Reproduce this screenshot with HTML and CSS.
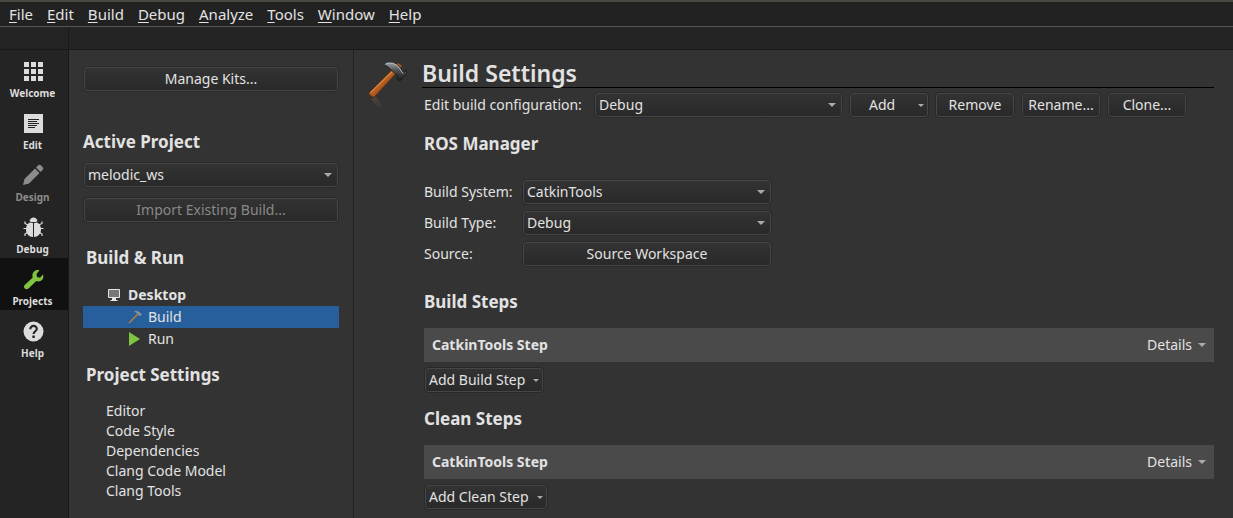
FILE: index.html
```html
<!DOCTYPE html>
<html lang="en">
<head>
<meta charset="utf-8">
<title>Build Settings</title>
<link rel="stylesheet" href="styles.css">
</head>
<body>
<nav class="menubar" aria-label="Main menu">
  <button class="menu"><u>F</u>ile</button>
  <button class="menu"><u>E</u>dit</button>
  <button class="menu"><u>B</u>uild</button>
  <button class="menu"><u>D</u>ebug</button>
  <button class="menu"><u>A</u>nalyze</button>
  <button class="menu"><u>T</u>ools</button>
  <button class="menu"><u>W</u>indow</button>
  <button class="menu"><u>H</u>elp</button>
</nav>
<div class="toolbar"><div class="toolbar-corner"></div></div>
<div class="workspace">
  <nav class="modes" aria-label="Modes">
    <button class="mode">
      <svg width="22" height="22" viewBox="0 0 22 22" fill="currentColor"><path d="M2 2h5v5H2zM9 2h5v5H9zM16 2h5v5h-5zM2 9h5v5H2zM9 9h5v5H9zM16 9h5v5h-5zM2 16h5v5H2zM9 16h5v5H9zM16 16h5v5h-5z"/></svg>
      <span>Welcome</span>
    </button>
    <button class="mode">
      <svg width="22" height="22" viewBox="0 0 22 22"><path fill="currentColor" d="M2 2h19v19H2z"/><path stroke="#222" d="M6 7.500h11M6 9.500h9M6 11.500h11M6 13.500h9M6 15.500h7"/></svg>
      <span>Edit</span>
    </button>
    <button class="mode mode-disabled" disabled>
      <svg width="22" height="22" viewBox="0 0 22 22" fill="currentColor"><path d="M1 21l1.500-6L13 4.500l4.500 4.500L7 19.500zM14 3.500l2.500-2.500q1-.6 2 0l2.500 2.500q.6 1 0 2L18.500 8z"/></svg>
      <span>Design</span>
    </button>
    <button class="mode">
      <svg width="22" height="22" viewBox="0 0 22 22"><path fill="none" stroke="currentColor" stroke-width="1.200" d="M6 9L3 7.500V5.500M5 12.500H1.500M6 16l-3 2v2M17 9l3-1.500v-2M18 12.500h3.500M17 16l3 2v2"/><path fill="currentColor" d="M7.500 5Q8.500 1.500 11.500 1.500T15.500 5L14 6H9z"/><path fill="currentColor" d="M11 7v14C7 21 4 17.500 4 13.500 4 10 5.500 7.500 8 6.500zM12 7v14c4 0 7-3.500 7-7.500 0-3.500-1.500-6-4-7z"/></svg>
      <span>Debug</span>
    </button>
    <button class="mode mode-active" aria-pressed="true">
      <svg width="22" height="22" viewBox="0 0 22 22"><path fill="#80c342" d="M17.500 2.300L14.500 6l.5 3 3 .7 3-3.200c1 3-.2 5.500-2.500 6.500-1.500.6-3 .5-4.200 0L6.500 20.500c-2.500 2.200-6-.9-3.800-3.500L10.700 9.500C9.300 5 13 1 17.500 2.300z"/></svg>
      <span>Projects</span>
    </button>
    <button class="mode">
      <svg width="22" height="22" viewBox="0 0 22 22"><circle cx="11.500" cy="11.500" r="10" fill="currentColor"/><path fill="none" stroke="#262626" stroke-width="2.200" d="M8.300 9.200C8.300 4.700 15 5 14.800 9c-.2 2.300-3.200 2.300-3.200 5"/><path fill="#262626" d="M10.300 15.500h2.500V18h-2.500z"/></svg>
      <span>Help</span>
    </button>
  </nav>

  <aside class="panel">
    <button class="btn">Manage Kits...</button>
    <section class="group project-group">
      <h2><label for="project">Active Project</label></h2>
      <div class="combo">
        <select id="project"><option>melodic_ws</option></select>
        <svg class="arrow" width="8" height="4" viewBox="0 0 8 4"><path d="M0 0h8L4 4z"/></svg>
      </div>
      <button class="btn" disabled>Import Existing Build...</button>
    </section>
    <section class="group run-group">
      <h2 class="inset">Build &amp; Run</h2>
      <ul class="tree">
        <li class="kit">
          <svg width="14" height="14" viewBox="0 0 14 14"><path fill="#777" stroke="#e4e4e4" d="M1.500 1.500h11v8h-11z"/><path fill="#e4e4e4" d="M5 10h4v2h1.500v1h-7v-1H5z"/></svg>
          Desktop
        </li>
        <li class="target selected">
          <svg width="14" height="14" viewBox="0 0 14 14"><path stroke="#ad7b4c" stroke-width="1.700" d="M1 13L10 4"/><path fill="#8492a0" d="M6 1.200Q9-.2 11.500 2.200l2.500 2.300-2 1.700-2.300-2.200L8 2.500z"/></svg>
          Build
        </li>
        <li class="target">
          <svg width="14" height="14" viewBox="0 0 14 14"><path fill="#80c342" d="M1 0l11 7-11 7z"/></svg>
          Run
        </li>
      </ul>
    </section>
    <section class="group settings-group">
      <h2 class="inset">Project Settings</h2>
      <ul class="settings">
        <li>Editor</li>
        <li>Code Style</li>
        <li>Dependencies</li>
        <li>Clang Code Model</li>
        <li>Clang Tools</li>
      </ul>
    </section>
  </aside>

  <main class="page">
    <svg class="hammer" width="42" height="50" viewBox="0 0 42 50">
      <defs>
        <linearGradient id="wood" x1="0" y1="0" x2="1" y2="1"><stop offset=".35" stop-color="#d67a35"/><stop offset=".65" stop-color="#984510"/></linearGradient>
        <linearGradient id="steel" x1="0" y1="0" x2="0" y2="1"><stop offset="0" stop-color="#a5a8a8"/><stop offset=".45" stop-color="#4c5050"/><stop offset="1" stop-color="#171a1a"/></linearGradient>
        <linearGradient id="fade" x1="0" y1="0" x2="0" y2="1"><stop offset="0" stop-color="#80573c" stop-opacity=".5"/><stop offset="1" stop-color="#80573c" stop-opacity="0"/></linearGradient>
      </defs>
      <path fill="url(#fade)" d="M3 38l5-2 8 11h-6z"/>
      <path fill="url(#wood)" stroke="#7a3409" stroke-width=".6" d="M1 32L25 8l5-6 4 3-4 5L6 36q-4-1-5-4z"/>
      <path stroke="#e9a566" stroke-width=".8" d="M3 31L26 9"/>
      <path fill="url(#steel)" stroke="#181b1b" stroke-width=".8" d="M15 3q10-5 17 3l3 5q2 1 3-2l1 3-7 8-3-2 0-4-6-5q-3-4-8-6z"/>
      <path fill="none" stroke="#b8bbbb" stroke-width="1" d="M18 2.500q8-2 13 4l4 6"/>
    </svg>
    <div class="content">
      <h1>Build Settings</h1>
      <div class="config">
        <label for="config">Edit build configuration:</label>
        <div class="combo config-combo">
          <select id="config"><option>Debug</option></select>
          <svg class="arrow" width="8" height="4" viewBox="0 0 8 4"><path d="M0 0h8L4 4z"/></svg>
        </div>
        <button class="btn action split"><span>Add</span><svg class="small-arrow" width="6" height="3" viewBox="0 0 6 3"><path d="M0 0h6L3 3z"/></svg></button>
        <button class="btn action">Remove</button>
        <button class="btn action">Rename...</button>
        <button class="btn action">Clone...</button>
      </div>

      <h2 class="section">ROS Manager</h2>
      <div class="form">
        <label for="system">Build System:</label>
        <div class="combo">
          <select id="system"><option>CatkinTools</option></select>
          <svg class="arrow" width="8" height="4" viewBox="0 0 8 4"><path d="M0 0h8L4 4z"/></svg>
        </div>
        <label for="type">Build Type:</label>
        <div class="combo">
          <select id="type"><option>Debug</option></select>
          <svg class="arrow" width="8" height="4" viewBox="0 0 8 4"><path d="M0 0h8L4 4z"/></svg>
        </div>
        <label for="source">Source:</label>
        <button class="btn" id="source">Source Workspace</button>
      </div>

      <section class="steps">
        <h2>Build Steps</h2>
        <div class="step">
          <strong>CatkinTools Step</strong>
          <button class="details">Details <svg class="arrow-inline" width="8" height="4" viewBox="0 0 8 4"><path d="M0 0h8L4 4z"/></svg></button>
        </div>
        <button class="btn add">Add Build Step <svg class="small-arrow" width="6" height="3" viewBox="0 0 6 3"><path d="M0 0h6L3 3z"/></svg></button>
      </section>
      <section class="steps">
        <h2>Clean Steps</h2>
        <div class="step">
          <strong>CatkinTools Step</strong>
          <button class="details">Details <svg class="arrow-inline" width="8" height="4" viewBox="0 0 8 4"><path d="M0 0h8L4 4z"/></svg></button>
        </div>
        <button class="btn add">Add Clean Step <svg class="small-arrow" width="6" height="3" viewBox="0 0 6 3"><path d="M0 0h6L3 3z"/></svg></button>
      </section>
    </div>
  </main>
</div>
</body>
</html>
```
FILE: styles.css
```css
* {
  box-sizing: border-box;
}

body {
  margin: 0;
  height: 100vh;
  overflow: hidden;
  display: flex;
  flex-direction: column;
  background: #333;
  color: #e2e2e2;
  font: 14px/20px "Noto Sans", "Open Sans", sans-serif;
}

button,
select {
  font: inherit;
  color: inherit;
}

h1,
h2,
ul {
  margin: 0;
  padding: 0;
}

h2 {
  font-size: 17px;
  line-height: 24px;
  font-weight: 700;
}

ul {
  list-style: none;
}

.menubar {
  flex: none;
  display: flex;
  gap: 14px;
  height: 27px;
  padding: 0 9px;
  border-top: 2px solid #4b4743;
  border-bottom: 1px solid #585858;
  background: #222;
  font-size: 15px;
}

.menu {
  padding: 0;
  border: 0;
  background: none;
}

.menu u {
  text-underline-offset: 2px;
}

.toolbar {
  flex: none;
  height: 23px;
  background: #242424;
  border-bottom: 1px solid #191919;
}

.toolbar-corner {
  width: 69px;
  height: 22px;
  border-right: 1px solid #191919;
}

.workspace {
  flex: 1;
  min-height: 0;
  display: flex;
}

.modes {
  flex: none;
  width: 69px;
  background: #242424;
  border-right: 1px solid #191919;
}

.mode {
  width: 100%;
  height: 52px;
  padding: 10px 3px 0 0;
  border: 0;
  background: none;
  display: flex;
  flex-direction: column;
  align-items: center;
  gap: 3px;
  color: #dcdcdc;
  font-size: 10px;
  line-height: 16px;
  font-weight: 700;
}

.mode svg {
  display: block;
}

.mode-active {
  background: #111;
}

.mode-disabled {
  color: #8c8c8c;
}

.panel {
  flex: none;
  width: 285px;
  padding: 16px 14px 0;
  border-right: 1px solid #222;
}

.btn,
.combo select {
  height: 26px;
  border: 1px solid #292929;
  border-radius: 4px;
  background: linear-gradient(#333, #292929);
  box-shadow: inset 0 0 0 1px #464646;
  line-height: 20px;
}

.btn {
  padding: 0 4px;
}

.panel .btn {
  width: 100%;
  display: block;
}

.btn:disabled {
  color: #888;
}

.combo {
  display: grid;
  align-items: center;
}

.combo select {
  grid-area: 1 / 1;
  width: 100%;
  appearance: none;
  padding: 0 24px 0 4px;
}

.arrow {
  grid-area: 1 / 1;
  justify-self: end;
  margin-right: 7px;
  fill: #aaa;
  pointer-events: none;
}

.arrow-inline,
.small-arrow {
  flex: none;
  fill: #aaa;
}

.project-group {
  margin-top: 38px;
  display: grid;
}

.project-group .combo {
  margin: 8px 0 9px;
}

.run-group {
  margin-top: 23px;
}

.inset {
  padding-left: 3px;
}

.tree {
  margin-top: 14px;
}

.tree li {
  height: 22px;
  display: flex;
  align-items: center;
}

.kit {
  gap: 7px;
  padding-left: 24px;
  font-weight: 700;
}

.target {
  gap: 6px;
  padding-left: 45px;
}

.selected {
  background: #265f9b;
}

.settings-group {
  margin-top: 13px;
}

.settings {
  margin-top: 14px;
  padding-left: 23px;
}

.page {
  flex: 1;
  min-width: 0;
  display: flex;
  padding: 11px 19px 0 14px;
}

.hammer {
  flex: none;
  margin-right: 12px;
}

.content {
  flex: 1;
  min-width: 0;
}

h1 {
  height: 27px;
  border-bottom: 1px solid #000;
  font-size: 23px;
  line-height: 24px;
  font-weight: 600;
}

.config {
  display: flex;
  align-items: center;
  gap: 6px;
  margin-top: 4px;
  padding-left: 2px;
}

.config-combo {
  flex: none;
  width: 249px;
}

.config label {
  flex: none;
  width: 164px;
  white-space: nowrap;
}

.action {
  flex: none;
  width: 80px;
}

.split {
  display: flex;
  align-items: center;
  justify-content: space-between;
  padding-left: 19px;
}

.section,
.form,
.steps {
  margin-left: 2px;
}

.section {
  margin-top: 14px;
}

.form {
  display: grid;
  grid-template-columns: 92px 250px;
  align-items: center;
  gap: 5px 6px;
  margin-top: 23px;
}

.steps {
  margin-top: 23px;
}

.steps + .steps {
  margin-top: 14px;
}

.step {
  height: 34px;
  margin-top: 14px;
  padding: 0 8px;
  display: flex;
  align-items: center;
  justify-content: space-between;
  background: #4a4a4a;
}

.step strong {
  font-weight: 700;
}

.details {
  display: flex;
  align-items: center;
  gap: 6px;
  padding: 0;
  border: 0;
  background: none;
}

.add {
  display: flex;
  align-items: center;
  gap: 8px;
  margin-top: 5px;
}
```
